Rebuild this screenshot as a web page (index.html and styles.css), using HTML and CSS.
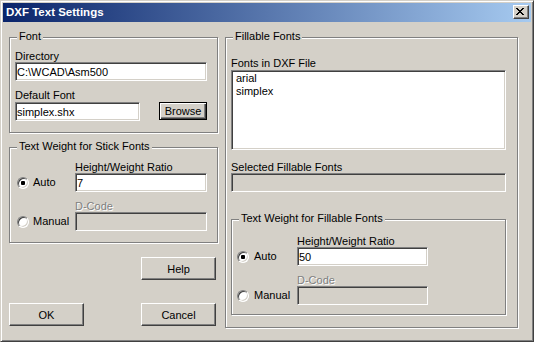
FILE: index.html
```html
<!DOCTYPE html>
<html>
<head>
<meta charset="utf-8">
<title>DXF Text Settings</title>
<link rel="stylesheet" href="styles.css">
</head>
<body>
<div class="window">
  <div class="titlebar">
    <span class="title">DXF Text Settings</span>
    <span class="close-btn"><svg width="8" height="7" viewBox="0 0 8 7"><path d="M0 0h2v1H0zM6 0h2v1H6zM1 1h2v1H1zM5 1h2v1H5zM2 2h4v1H2zM3 3h2v1H3zM2 4h4v1H2zM1 5h2v1H1zM5 5h2v1H5zM0 6h2v1H0zM6 6h2v1H6z" fill="#000"/></svg></span>
  </div>
  <div class="content">
    <div class="col-left">
      <div class="group group-font">
        <div class="legend">Font</div>
        <div class="label lbl-dir">Directory</div>
        <input class="edit edit-dir" type="text" value="C:\WCAD\Asm500">
        <div class="label lbl-default">Default Font</div>
        <div class="font-row">
          <input class="edit edit-font" type="text" value="simplex.shx">
          <button class="btn btn-default">Browse</button>
        </div>
      </div>
      <div class="group group-stick">
        <div class="legend">Text Weight for Stick Fonts</div>
        <div class="weight-grid stick-grid">
          <div class="label col2 lbl-first">Height/Weight Ratio</div>
          <div class="radio-label"><span class="radio"><span class="dot"></span></span>Auto</div>
          <input class="edit edit-weight" type="text" value="7">
          <div class="label col2 lbl-disabled">D-Code</div>
          <div class="radio-label"><span class="radio"></span>Manual</div>
          <input class="edit edit-weight edit-disabled" type="text" disabled>
        </div>
      </div>
      <div class="help-row"><button class="btn btn-std">Help</button></div>
      <div class="action-row">
        <button class="btn btn-std">OK</button>
        <button class="btn btn-std">Cancel</button>
      </div>
    </div>
    <div class="group group-fill">
      <div class="legend">Fillable Fonts</div>
      <div class="label lbl-fonts">Fonts in DXF File</div>
      <div class="listbox">
        <div class="list-item">arial</div>
        <div class="list-item">simplex</div>
      </div>
      <div class="label lbl-selected">Selected Fillable Fonts</div>
      <input class="edit edit-selected edit-disabled" type="text" disabled>
      <div class="group group-inner">
        <div class="legend">Text Weight for Fillable Fonts</div>
        <div class="weight-grid inner-grid">
          <div class="label col2 lbl-first-inner">Height/Weight Ratio</div>
          <div class="radio-label wide"><span class="radio"><span class="dot"></span></span>Auto</div>
          <input class="edit edit-weight-inner" type="text" value="50">
          <div class="label col2 lbl-disabled">D-Code</div>
          <div class="radio-label wide"><span class="radio"></span>Manual</div>
          <input class="edit edit-weight-inner edit-disabled" type="text" disabled>
        </div>
      </div>
    </div>
  </div>
</div>
</body>
</html>
```
FILE: styles.css
```css
* { box-sizing: border-box; }

html, body {
  margin: 0;
  padding: 0;
  background: #D4D0C8;
}

body {
  font-family: "Liberation Sans", Arial, sans-serif;
  font-size: 11px;
  font-weight: normal;
  color: #000;
}

.window {
  width: 534px;
  height: 342px;
  background: #D4D0C8;
  border: 1px solid;
  border-color: #D4D0C8 #404040 #404040 #D4D0C8;
  padding: 2px;
  box-shadow: inset 1px 1px #fff, inset -1px -1px #808080;
}

.titlebar {
  height: 19px;
  display: flex;
  justify-content: space-between;
  align-items: center;
  padding-left: 3px;
  background: linear-gradient(90deg, #0A246A 0%, #A6CAF0 100%);
}

.title {
  color: #fff;
  font-weight: bold;
  font-size: 11.5px;
  line-height: 19px;
  white-space: nowrap;
}

.close-btn {
  align-self: flex-start;
  margin: 2px 2px 0 0;
  width: 16px;
  height: 14px;
  display: flex;
  align-items: flex-start;
  padding: 2px 0 0 2px;
  background: #D4D0C8;
  border: 1px solid;
  border-color: #fff #404040 #404040 #fff;
  box-shadow: inset -1px -1px #808080;
}

.close-btn svg { display: block; }

.content {
  display: flex;
  align-items: flex-start;
  gap: 6px;
  padding: 15px 0 0 6px;
}

.col-left {
  width: 210px;
  display: flex;
  flex-direction: column;
}

.group {
  border: 1px solid #808080;
  box-shadow: inset 1px 1px #fff, 1px 1px #fff;
  padding: 0 0 0 5px;
}

.legend {
  width: fit-content;
  line-height: 13px;
  height: 13px;
  margin: -8px 0 0 2px;
  padding: 0 2px;
  background: #D4D0C8;
  white-space: nowrap;
}

.label {
  line-height: 12px;
  height: 12px;
  white-space: nowrap;
  font-weight: normal;
}

.lbl-disabled {
  color: #808080;
  text-shadow: 1px 1px 0 #fff;
}

/* edit controls */
.edit {
  display: block;
  height: 19px;
  margin: 0;
  padding: 0 1px;
  font-family: "Liberation Sans", Arial, sans-serif;
  font-size: 11px;
  color: #000;
  background: #fff;
  border: 1px solid;
  border-color: #808080 #fff #fff #808080;
  box-shadow: inset 1px 1px #404040, inset -1px -1px #D4D0C8;
  outline: none;
  border-radius: 0;
}

.edit-disabled {
  background: #D4D0C8;
}

/* buttons */
.btn {
  margin: 0;
  padding: 0;
  font-family: "Liberation Sans", Arial, sans-serif;
  font-size: 11px;
  color: #000;
  background: #D4D0C8;
  border: 1px solid;
  border-color: #fff #404040 #404040 #fff;
  box-shadow: inset -1px -1px #808080;
  border-radius: 0;
  text-align: center;
}

.btn-std {
  width: 75px;
  height: 23px;
}

.btn-default {
  width: 48px;
  height: 18px;
  border: 1px solid #000;
  box-shadow: inset 1px 1px #fff, inset -1px -1px #404040, inset -2px -2px #808080;
}

/* Font group */
.group-font {
  width: 209px;
  height: 96px;
  padding-right: 10px;
}

.lbl-dir { margin-top: 7px; }
.edit-dir { width: 192px; }
.lbl-default { margin-top: 8px; }

.font-row {
  margin-top: 1px;
  display: flex;
  justify-content: space-between;
  align-items: flex-start;
}

.edit-font { width: 125px; }

/* Stick group */
.group-stick {
  width: 209px;
  height: 96px;
  margin-top: 14px;
}

.weight-grid {
  display: grid;
  align-items: start;
}

.stick-grid {
  margin-left: 2px;
  grid-template-columns: 58px 132px;
}

.col2 { grid-column: 2; }

.lbl-first { margin-top: 8px; }
.weight-grid .lbl-disabled { margin-top: 8px; }

.radio-label {
  grid-column: 1;
  align-self: center;
  display: flex;
  align-items: center;
  gap: 4px;
  line-height: 13px;
  white-space: nowrap;
  font-weight: normal;
}

.radio-label.wide { gap: 5px; }

.radio {
  flex: none;
  width: 12px;
  height: 12px;
  border-radius: 50%;
  border: 1px solid;
  border-color: #808080 #fff #fff #808080;
  box-shadow: inset 1px 1px #404040, inset -1px -1px #D4D0C8;
  background: #fff;
  display: flex;
  align-items: center;
  justify-content: center;
}

.dot {
  width: 4px;
  height: 4px;
  background: #000;
  border-radius: 1px;
}

.edit-weight { width: 132px; }

.help-row {
  margin-top: 14px;
  padding-right: 3px;
  display: flex;
  justify-content: flex-end;
}

.action-row {
  margin-top: 23px;
  padding-right: 3px;
  display: flex;
  justify-content: space-between;
}

/* Fillable group */
.group-fill {
  width: 293px;
  height: 291px;
  padding-right: 11px;
}

.lbl-fonts { margin-top: 14px; }

.listbox {
  margin-top: 1px;
  width: 275px;
  height: 80px;
  background: #fff;
  border: 1px solid;
  border-color: #808080 #fff #fff #808080;
  box-shadow: inset 1px 1px #404040, inset -1px -1px #D4D0C8;
  padding: 1px 0 0 4px;
}

.list-item {
  line-height: 13px;
  height: 13px;
  white-space: nowrap;
}

.lbl-selected { margin-top: 11px; }
.edit-selected { width: 275px; }

.group-inner {
  width: 275px;
  height: 96px;
  margin-top: 27px;
}

.inner-grid {
  grid-template-columns: 60px 131px;
}

.lbl-first-inner { margin-top: 10px; }

.edit-weight-inner { width: 131px; }
```
